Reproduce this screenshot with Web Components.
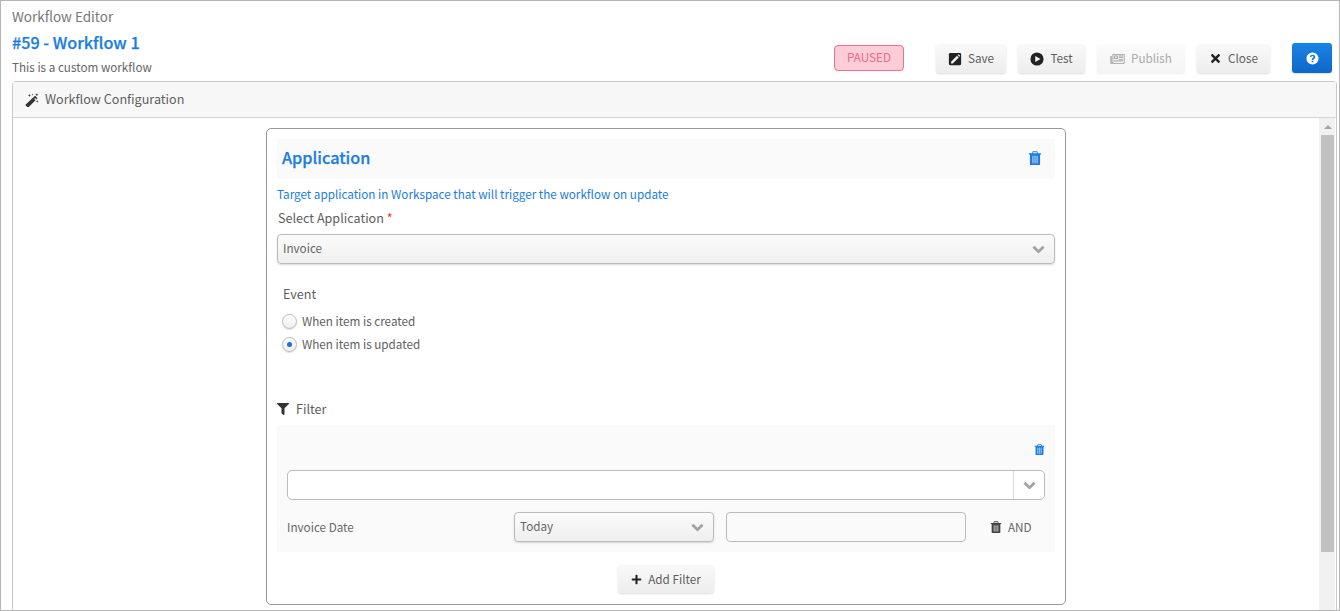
<!DOCTYPE html>
<html lang="en">
<head>
<meta charset="utf-8">
<title>Workflow Editor</title>
<style>
  html, body { margin: 0; height: 611px; overflow: hidden; background: #fff; }
  body { font-family: "Noto Sans CJK SC", "Noto Sans", sans-serif; font-size: 11.7px; color: #5e5e5e; }
</style>
</head>
<body>
<workflow-editor></workflow-editor>

<script>
const ICONS = {
  times: ["0 0 352 512", "M242.72 256l100.07-100.07c12.28-12.28 12.28-32.19 0-44.48l-22.24-22.24c-12.28-12.28-32.19-12.28-44.48 0L176 189.28 75.93 89.21c-12.28-12.28-32.19-12.28-44.48 0L9.21 111.45c-12.28 12.28-12.28 32.19 0 44.48L109.28 256 9.21 356.07c-12.28 12.28-12.28 32.19 0 44.48l22.24 22.24c12.28 12.28 32.2 12.28 44.48 0L176 322.72l100.07 100.07c12.28 12.28 32.2 12.28 44.48 0l22.24-22.24c12.28-12.28 12.28-32.19 0-44.48L242.72 256z"],
  plus: ["0 0 448 512", "M416 208H272V64c0-17.67-14.33-32-32-32h-32c-17.67 0-32 14.33-32 32v144H32c-17.67 0-32 14.33-32 32v32c0 17.67 14.33 32 32 32h144v144c0 17.67 14.33 32 32 32h32c17.67 0 32-14.33 32-32V304h144c17.67 0 32-14.33 32-32v-32c0-17.67-14.33-32-32-32z"],
  filter: ["0 0 512 512", "M487.976 0H24.028C2.71 0-8.047 25.866 7.058 40.971L192 225.941V432c0 7.831 3.821 15.17 10.237 19.662l80 55.98C298.02 518.69 320 507.493 320 487.98V225.941l184.947-184.97C520.021 25.896 509.338 0 487.976 0z"],
  // the rest are drawn by hand on a 16 grid
  chevron: ["0 0 16 16", "M0.500 5.800L3 3.300L8 8.200L13 3.300L15.500 5.800L8 13z"],
  trash: ["0 0 16 16", "M5.500 0.300h5l1 2.200H15v1.500h-1.200V15a1 1 0 0 1-1 1H3.200a1 1 0 0 1-1-1V4H1V2.500h3.500zM6 1.500l-.5 1h5l-.5-1zM5 5.500v8.500h1.200V5.500zM7.400 5.500v8.500h1.200V5.500zM9.800 5.500v8.500h1.200V5.500z", "M5 5.500h1.200v8.500H5zM7.400 5.500h1.200v8.500H7.400zM9.800 5.500H11v8.500H9.800z"],
  edit: ["0 0 16 16", "M2.500 1h11A1.500 1.500 0 0 1 15 2.500v11a1.500 1.500 0 0 1-1.500 1.500h-11A1.500 1.500 0 0 1 1 13.500v-11A1.500 1.500 0 0 1 2.500 1zM10.300 4.200L3.500 11V13h2l6.800-6.800zM11 3.500l2 2 .6-.6a.6.600 0 0 0 0-.9L12.500 2.900a.6.600 0 0 0-.9 0z"],
  play: ["0 0 16 16", "M8 .5a7.500 7.500 0 1 1 0 15A7.500 7.500 0 0 1 8 .5zM6 4.500v7l6-3.500z"],
  news: ["0 0 18 16", "M3 2.500h14.500v10.800a1 1 0 0 1-1 1H1.500a1 1 0 0 1-1-1V5H2v8.300h.300a.7.700 0 0 0 .700-.700zM4 3.500v9.800h12.500V3.500zM5 4.500h4.500v4H5zM6 5.500v2h2.500v-2zM10.500 4.500h5v1h-5zM10.500 6.500h5v1h-5zM10.500 8.500h5v1h-5zM5 10.500h10.500v1H5z"],
  question: ["0 0 16 16", "M8 .5a7.500 7.500 0 1 1 0 15A7.500 7.500 0 0 1 8 .5zM7 10.800v1.900h2v-1.900zM8 3.300c-1.700 0-2.900.9-3.200 2.500l1.800.4c.2-.8.600-1.200 1.300-1.200s1.200.4 1.200 1-.4.900-1 1.300C7.300 7.900 7 8.500 7 9.300v.6h2v-.4c0-.4.200-.6.800-1 .9-.6 1.500-1.300 1.500-2.500 0-1.600-1.400-2.700-3.300-2.700z"],
  magic: ["0 0 16 16", "M11.500 3.200l2.800 2.800L4 16.300a.8.800 0 0 1-1.100 0L.8 14.200a.8.800 0 0 1 0-1.100zM10.400 6.800l1.300 1.300 1.200-1.200-1.300-1.300zM5 0.800l.5 1.400 1.400.5-1.400.5L5 4.600l-.5-1.400-1.400-.5 1.400-.5zM13.500 .2l.5 1.300 1.300.5-1.300.5-.5 1.300-.5-1.300-1.300-.5 1.300-.5zM14 8l.4 1.100 1.100.4-1.100.4-.4 1.100-.4-1.100-1.100-.4 1.100-.4zM8.600 .8l.3.8.8.3-.8.3-.3.8-.3-.8-.8-.3.8-.3z"]
};

class WfIcon extends HTMLElement {
  connectedCallback() {
    const [box, d, tint] = ICONS[this.getAttribute("name")];
    const size = this.getAttribute("size") || 14;
    this.attachShadow({ mode: "open" }).innerHTML = `
      <style>
        :host { display: inline-flex; align-items: center; justify-content: center; line-height: 0; flex: none; }
        svg { fill: currentColor; display: block; }
      </style>
      <svg width="${size}" height="${size}" viewBox="${box}"><path fill-rule="evenodd" d="${d}"/>${tint ? `<path opacity=".45" d="${tint}"/>` : ""}</svg>`;
  }
}

class WfButton extends HTMLElement {
  static get styles() {
    return /* css */`
      :host {
        display: inline-flex;
        align-items: center;
        justify-content: center;
        gap: 6px;
        box-sizing: border-box;
        height: 29px;
        border-radius: 3px;
        font-size: 11.7px;
        color: #5e5e5e;
        background: linear-gradient(#f9f9f9, #ededed);
        box-shadow: 0 1px 2px rgba(0, 0, 0, .15);
      }
      :host([disabled]) { color: #aaa; background: linear-gradient(#fbfbfb, #f4f4f4); box-shadow: 0 1px 2px rgba(0, 0, 0, .07); }
      :host([primary]) { color: #fff; gap: 0; height: 30px; margin-top: -1px; background: linear-gradient(#1b84e4, #0e66c9); }
      .text { margin-bottom: 2px; }
      wf-icon { color: #222; }
      :host([disabled]) wf-icon { color: #999; }
      :host([primary]) wf-icon { color: #fff; }
    `;
  }

  connectedCallback() {
    const icon = this.getAttribute("icon");
    const size = this.getAttribute("icon-size") || 14;
    this.attachShadow({ mode: "open" }).innerHTML = `
      <style>${WfButton.styles}</style>
      <wf-icon name="${icon}" size="${size}"></wf-icon><span class="text"><slot></slot></span>`;
  }
}

class WfSelect extends HTMLElement {
  connectedCallback() {
    this.attachShadow({ mode: "open" }).innerHTML = /* html */`
      <style>
        :host {
          display: flex;
          align-items: center;
          justify-content: space-between;
          box-sizing: border-box;
          height: 30px;
          padding: 0 9px 0 5px;
          border: 1px solid #bbb;
          border-radius: 4px;
          font-size: 11.7px;
          color: #666;
          background: linear-gradient(#fbfbfb, #efefef);
          box-shadow: 0 1px 2px rgba(0, 0, 0, .15);
        }
        .text { margin-bottom: 3px; }
        wf-icon { color: #a3a3a3; }
      </style>
      <span class="text"><slot></slot></span>
      <wf-icon name="chevron" size="13"></wf-icon>`;
  }
}

class WfCombo extends HTMLElement {
  connectedCallback() {
    this.attachShadow({ mode: "open" }).innerHTML = /* html */`
      <style>
        :host {
          display: flex;
          box-sizing: border-box;
          height: 30px;
          border: 1px solid #bbb;
          border-radius: 5px;
          background: #fff;
        }
        .field { flex: 1; }
        .toggle {
          width: 30px;
          display: flex;
          align-items: center;
          justify-content: center;
          border-left: 1px solid #ddd;
          color: #a3a3a3;
        }
      </style>
      <div class="field"></div>
      <div class="toggle"><wf-icon name="chevron" size="13"></wf-icon></div>`;
  }
}

class WfRadio extends HTMLElement {
  connectedCallback() {
    this.attachShadow({ mode: "open" }).innerHTML = /* html */`
      <style>
        :host { display: flex; align-items: center; gap: 5px; height: 23px; margin-left: -1px; font-size: 11.7px; color: #5e5e5e; }
        .dot {
          width: 13px;
          height: 13px;
          border: 1px solid #bbb;
          border-radius: 50%;
          display: flex;
          align-items: center;
          justify-content: center;
          background: linear-gradient(#fff, #eee);
          box-shadow: 0 1px 1px rgba(0, 0, 0, .12);
        }
        :host([checked]) .dot::after {
          content: "";
          width: 5px;
          height: 5px;
          border-radius: 50%;
          background: #1a73d6;
        }
        .text { margin-bottom: 2px; }
      </style>
      <span class="dot"></span><span class="text"><slot></slot></span>`;
  }
}

class WfScrollbar extends HTMLElement {
  connectedCallback() {
    this.attachShadow({ mode: "open" }).innerHTML = /* html */`
      <style>
        :host {
          display: flex;
          flex-direction: column;
          flex: none;
          box-sizing: border-box;
          width: 16px;
          padding: 0 1px 0 2px;
          background: #f1f1f1;
        }
        .arrow { height: 17px; display: flex; align-items: center; justify-content: center; }
        .arrow::before {
          content: "";
          border: 4px solid transparent;
          border-top: 0;
          border-bottom: 4px solid #a3a3a3;
        }
        .thumb { height: 417px; background: #c1c1c1; }
      </style>
      <div class="arrow"></div>
      <div class="thumb"></div>`;
  }
}

class WfFilterRow extends HTMLElement {
  connectedCallback() {
    this.attachShadow({ mode: "open" }).innerHTML = /* html */`
      <style>
        :host { display: flex; align-items: center; height: 30px; margin-top: 12px; font-size: 11.7px; color: #666; }
        .name { width: 227px; margin-bottom: 2px; }
        wf-select { width: 200px; }
        .value {
          box-sizing: border-box;
          width: 240px;
          height: 30px;
          margin-left: 12px;
          border: 1px solid #bbb;
          border-radius: 4px;
        }
        wf-icon { color: #444; margin-left: 24px; }
        .op { margin: 0 0 2px 6px; }
      </style>
      <span class="name"><slot name="field"></slot></span>
      <wf-select>Today</wf-select>
      <div class="value"></div>
      <wf-icon name="trash" size="12"></wf-icon>
      <span class="op">AND</span>`;
  }
}

class WfCard extends HTMLElement {
  static get styles() {
    return /* css */`
      :host {
        display: block;
        box-sizing: border-box;
        width: 800px;
        height: 477px;
        margin: 10px auto 0;
        padding: 10px;
        border: 1px solid #999;
        border-radius: 5px;
      }
      .head {
        display: flex;
        align-items: center;
        justify-content: space-between;
        box-sizing: border-box;
        height: 40px;
        padding: 0 13px 2px 5px;
        background: #fafafa;
        color: #1a7de0;
      }
      .head h2 { margin: 0 0 2px; font-size: 16.2px; font-weight: 500; -webkit-text-stroke: .25px #1a7de0; }
      .hint { margin: 6px 0 0; height: 18px; line-height: 18px; font-size: 11.7px; color: #1a7de0; }
      .label { margin: 5px 0 0 1px; height: 20px; line-height: 20px; font-size: 12.6px; }
      .label b { color: #e33; font-weight: 400; }
      wf-select { margin-top: 6px; }
      .event { margin: 20px 0 0 6px; }
      .event p { margin: 0 0 6px; height: 20px; line-height: 20px; font-size: 12.6px; }
      .filter-title { display: flex; align-items: center; gap: 7px; margin-top: 43px; height: 20px; font-size: 12.6px; }
      .filter-title span { margin-bottom: 2px; }
      .filter-title wf-icon { color: #333; }
      .filter {
        box-sizing: border-box;
        height: 127px;
        margin-top: 6px;
        padding: 19px 10px 0;
        background: #fafafa;
      }
      .filter .tools { display: flex; justify-content: flex-end; height: 26px; color: #1a7de0; }
      .foot { display: flex; justify-content: center; margin-top: 13px; }
      .foot wf-button { width: 96px; height: 28px; }
    `;
  }

  connectedCallback() {
    this.attachShadow({ mode: "open" }).innerHTML = /* html */`
      <style>${WfCard.styles}</style>
      <div class="head">
        <h2>Application</h2>
        <wf-icon name="trash" size="14"></wf-icon>
      </div>
      <p class="hint">Target application in Workspace that will trigger the workflow on update</p>
      <div class="label">Select Application <b>*</b></div>
      <wf-select>Invoice</wf-select>
      <div class="event">
        <p>Event</p>
        <wf-radio>When item is created</wf-radio>
        <wf-radio checked>When item is updated</wf-radio>
      </div>
      <div class="filter-title"><wf-icon name="filter" size="12"></wf-icon><span>Filter</span></div>
      <div class="filter">
        <div class="tools"><wf-icon name="trash" size="11" style="align-self:flex-start"></wf-icon></div>
        <wf-combo></wf-combo>
        <wf-filter-row><span slot="field">Invoice Date</span></wf-filter-row>
      </div>
      <div class="foot"><wf-button icon="plus" icon-size="11">Add Filter</wf-button></div>`;
  }
}

class WorkflowEditor extends HTMLElement {
  static get styles() {
    return /* css */`
      :host {
        display: flex;
        flex-direction: column;
        box-sizing: border-box;
        height: 611px;
        border: 1px solid #b5b5b5;
        padding: 0 2px 0 11px;
        overflow: hidden;
      }
      .top { display: flex; align-items: flex-start; justify-content: space-between; height: 80px; flex: none; }
      .eyebrow { height: 20px; line-height: 20px; margin-top: 5px; font-size: 13.5px; color: #777; }
      h1 { margin: 6px 0 0; height: 20px; line-height: 20px; font-size: 16.2px; font-weight: 500; -webkit-text-stroke: .25px #1a7de0; color: #1a7de0; }
      .desc { margin: 6px 0 0; height: 18px; line-height: 18px; font-size: 11.7px; color: #666; }
      .actions { display: flex; align-items: flex-start; gap: 12px; margin: 43px 5px 0 0; }
      .badge {
        box-sizing: border-box;
        display: flex;
        align-items: center;
        justify-content: center;
        width: 70px;
        height: 26px;
        margin: 1px 20px 0 0;
        padding-bottom: 3px;
        border: 1px solid #f06f8d;
        border-radius: 4px;
        background: #fdcdd8;
        color: #f5668a;
        font-size: 11.7px;
      }
      .help { margin-left: 10px; width: 40px; }
      .panel {
        flex: 1;
        display: flex;
        flex-direction: column;
        min-height: 0;
        border: 1px solid #c8c8c8;
        border-bottom: 0;
        border-radius: 4px 4px 0 0;
      }
      .panel-head {
        display: flex;
        align-items: center;
        gap: 6px;
        flex: none;
        height: 35px;
        padding-left: 12px;
        background: #f7f7f7;
        border-bottom: 1px solid #d5d5d5;
        font-size: 12.6px;
      }
      .panel-head span { margin-bottom: 2px; }
      .panel-head wf-icon { color: #333; }
      .panel-body { flex: 1; display: flex; min-height: 0; }
      .canvas { flex: 1; min-width: 0; }
      wf-scrollbar { margin-right: 1px; }
    `;
  }

  connectedCallback() {
    this.attachShadow({ mode: "open" }).innerHTML = /* html */`
      <style>${WorkflowEditor.styles}</style>
      <header class="top">
        <div>
          <div class="eyebrow">Workflow Editor</div>
          <h1>#59 - Workflow 1</h1>
          <p class="desc">This is a custom workflow</p>
        </div>
        <div class="actions">
          <div class="badge">PAUSED</div>
          <wf-button style="width:70px" icon="edit">Save</wf-button>
          <wf-button style="width:67px" icon="play">Test</wf-button>
          <wf-button style="width:88px" icon="news" icon-size="15" disabled>Publish</wf-button>
          <wf-button style="width:73px" icon="times" icon-size="13">Close</wf-button>
          <wf-button class="help" icon="question" icon-size="13" primary></wf-button>
        </div>
      </header>
      <section class="panel">
        <div class="panel-head"><wf-icon name="magic" size="14"></wf-icon><span>Workflow Configuration</span></div>
        <div class="panel-body">
          <div class="canvas"><wf-card></wf-card></div>
          <wf-scrollbar></wf-scrollbar>
        </div>
      </section>`;
  }
}

customElements.define("wf-icon", WfIcon);
customElements.define("wf-button", WfButton);
customElements.define("wf-select", WfSelect);
customElements.define("wf-combo", WfCombo);
customElements.define("wf-radio", WfRadio);
customElements.define("wf-scrollbar", WfScrollbar);
customElements.define("wf-filter-row", WfFilterRow);
customElements.define("wf-card", WfCard);
customElements.define("workflow-editor", WorkflowEditor);
</script>
</body>
</html>
